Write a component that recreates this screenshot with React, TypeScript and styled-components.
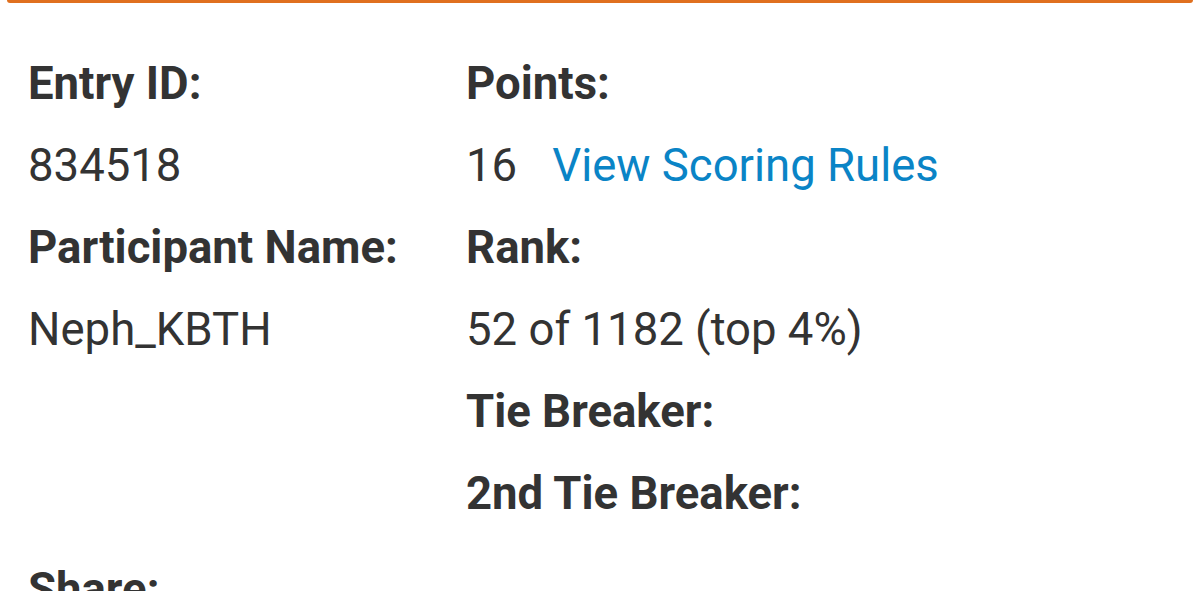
import React from 'react';
import styled, { createGlobalStyle } from 'styled-components';

const GlobalStyle = createGlobalStyle`
  html, body {
    margin: 0;
    padding: 0;
    background: #ffffff;
  }
  body {
    font-family: Roboto, "Liberation Sans", Arial, sans-serif;
    color: #333333;
    overflow: hidden;
  }
`;

// 卡片底边（上方卡片的橙色边框）
const CardEdge = styled.div`
  height: 3px;
  margin: 0 7px;
  background: #e0701f;
  border-radius: 0 0 4px 4px;
`;

const Page = styled.div`
  padding: 40px 28px 0;
`;

const Details = styled.div`
  display: grid;
  grid-template-columns: 438px 1fr;
`;

const Column = styled.div`
  display: flex;
  flex-direction: column;
`;

const Label = styled.div`
  font-size: 45.5px;
  font-weight: 700;
  line-height: 82px;
  white-space: nowrap;
`;

const SectionLabel = styled(Label)`
  margin-top: 14px;
`;

const Value = styled.div`
  font-size: 45.5px;
  font-weight: 400;
  line-height: 82px;
  white-space: nowrap;
`;

const Link = styled.a`
  color: #0a84c6;
  text-decoration: none;
  margin-left: 35px;
`;

interface Field {
  label: string;
  value?: React.ReactNode;
}

const leftFields: Field[] = [
  { label: 'Entry ID:', value: '834518' },
  { label: 'Participant Name:', value: 'Neph_KBTH' },
];

const rightFields: Field[] = [
  {
    label: 'Points:',
    value: (
      <>
        16<Link href="#">View Scoring Rules</Link>
      </>
    ),
  },
  { label: 'Rank:', value: '52 of 1182 (top 4%)' },
  { label: 'Tie Breaker:' },
  { label: '2nd Tie Breaker:' },
];

const renderFields = (fields: Field[]) =>
  fields.map((f) => (
    <React.Fragment key={f.label}>
      <Label>{f.label}</Label>
      {f.value !== undefined && <Value>{f.value}</Value>}
    </React.Fragment>
  ));

const App: React.FC = () => {
  return (
    <>
      <GlobalStyle />
      <CardEdge />
      <Page>
        <Details>
          <Column>{renderFields(leftFields)}</Column>
          <Column>{renderFields(rightFields)}</Column>
        </Details>
        <SectionLabel>Share:</SectionLabel>
      </Page>
    </>
  );
};

export default App;
